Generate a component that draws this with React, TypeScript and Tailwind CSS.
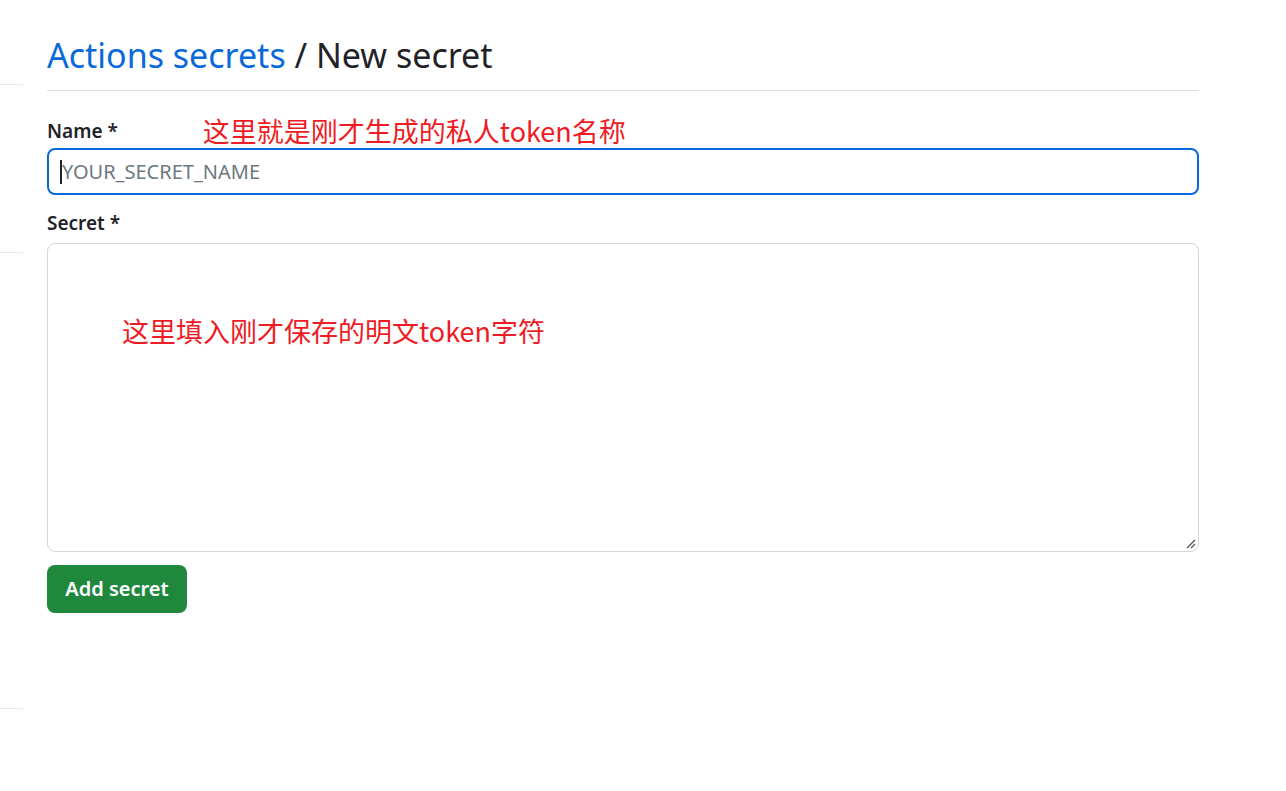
import React from "react";

export default function App() {
  const sans = { fontFamily: '"Noto Sans", "Noto Sans CJK SC", sans-serif' };
  const cjk = { fontFamily: '"Noto Sans CJK SC", "Noto Sans", sans-serif' };
  return (
    <div className="flex w-[1286px] h-[791px] bg-white text-[#1f2328]" style={sans}>
      <div className="w-[23px] flex flex-col shrink-0">
        <div className="h-[84px]" />
        <div className="h-px bg-[#e5e8eb]" />
        <div className="h-[167px]" />
        <div className="h-px bg-[#e5e8eb]" />
        <div className="h-[455px]" />
        <div className="h-px bg-[#e5e8eb]" />
      </div>
      <div className="ml-[24px] w-[1152px] flex flex-col">
        <div className="pt-[32px] pb-[12px] border-b border-[#d8dee4]">
          <h2 className="text-[34px] leading-[46px] font-normal">
            <span className="text-[#0969da]">Actions secrets</span> / New secret
          </h2>
        </div>
        <div className="mt-[28px] h-[24px] flex items-center">
          <label className="text-[19px] leading-[24px] font-semibold">Name *</label>
          <span className="ml-[85px] text-[27px] leading-[24px] text-[#ee1c25] whitespace-nowrap" style={cjk}>
            这里就是刚才生成的私人token名称
          </span>
        </div>
        <div className="mt-[5px] h-[47px] rounded-[8px] border-2 border-[#0969da] flex items-center px-[11px]">
          <span className="w-[2px] h-[24px] bg-[#1f2328]" />
          <span className="text-[20px] text-[#6e7781]">YOUR_SECRET_NAME</span>
        </div>
        <label className="mt-[16px] text-[19px] leading-[24px] font-semibold">Secret *</label>
        <div className="mt-[8px] h-[309px] rounded-[8px] border border-[#d0d7de] relative">
          <div className="pt-[70px] pl-[74px] text-[27px] leading-[34px] text-[#ee1c25]" style={cjk}>
            这里填入刚才保存的明文token字符
          </div>
          <svg className="absolute right-[2px] bottom-[2px]" width="10" height="10" viewBox="0 0 10 10">
            <line x1="1" y1="9" x2="9" y2="1" stroke="#555" strokeWidth="1.2" />
            <line x1="5" y1="9" x2="9" y2="5" stroke="#555" strokeWidth="1.2" />
          </svg>
        </div>
        <div className="mt-[13px]">
          <button className="h-[48px] w-[140px] rounded-[8px] bg-[#1f883d] text-white text-[20px] font-semibold">
            Add secret
          </button>
        </div>
      </div>
    </div>
  );
}
